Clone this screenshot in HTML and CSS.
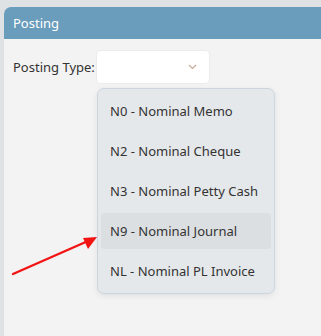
FILE: index.html
```html
<!DOCTYPE html>
<html>
<head>
<meta charset="utf-8">
<link rel="stylesheet" href="styles.css">
</head>
<body>
<div class="panel">
  <div class="panel-header">Posting</div>
  <div class="panel-body">
    <div class="field">
      <span class="label">Posting Type:</span>
      <div class="select">
        <svg class="chev" width="9" height="6" viewBox="0 0 9 6"><path d="M1 1 L4.5 4.5 L8 1" fill="none" stroke="#c9a995" stroke-width="1.1"/></svg>
      </div>
    </div>
  </div>
</div>
<ul class="dropdown">
  <li class="item">N0 - Nominal Memo</li>
  <li class="item">N2 - Nominal Cheque</li>
  <li class="item">N3 - Nominal Petty Cash</li>
  <li class="item active">N9 - Nominal Journal</li>
  <li class="item">NL - Nominal PL Invoice</li>
</ul>
<svg class="arrow" width="100" height="50" viewBox="0 0 100 50">
  <line x1="13" y1="46" x2="88" y2="13" stroke="#f21313" stroke-width="2.4" stroke-linecap="round"/>
  <polygon points="97,9 83,10 88,21" fill="#f21313"/>
</svg>
</body>
</html>
```
FILE: styles.css
```css
html, body {
  margin: 0;
  padding: 0;
}
body {
  width: 321px;
  height: 336px;
  overflow: hidden;
  background: #dfe2e5;
  font-family: "Noto Sans", "Open Sans", sans-serif;
  position: relative;
}
.panel {
  margin: 7px 0 0 4px;
  height: 329px;
  background: #f3f3f3;
  border-top-left-radius: 7px;
  overflow: hidden;
}
.panel-header {
  height: 32px;
  line-height: 32px;
  background: #6a9cbb;
  color: #fff;
  font-size: 13px;
  padding-left: 9px;
}
.panel-body {
  padding: 12px 9px;
}
.field {
  display: flex;
  align-items: center;
  gap: 2px;
}
.label {
  font-size: 13px;
  color: #333;
}
.select {
  width: 112px;
  height: 32px;
  background: #fff;
  border-radius: 4px;
  box-shadow: 0 0 0 1px #ebebeb;
  display: flex;
  align-items: center;
  justify-content: flex-end;
  padding-right: 12px;
  box-sizing: border-box;
}
.dropdown {
  position: absolute;
  left: 97px;
  top: 88px;
  width: 178px;
  margin: 0;
  padding: 4px 3px;
  box-sizing: border-box;
  list-style: none;
  background: #e5e8eb;
  border: 1px solid #cdd6df;
  border-radius: 7px;
  box-shadow: 0 2px 6px rgba(0,0,0,0.08);
  display: flex;
  flex-direction: column;
  gap: 4px;
}
.item {
  height: 36px;
  line-height: 36px;
  padding-left: 9px;
  font-size: 13px;
  color: #333;
  border-radius: 3px;
  white-space: nowrap;
}
.item.active {
  background: #dcdfe2;
}
.arrow {
  position: absolute;
  left: 0;
  top: 228px;
}
```
